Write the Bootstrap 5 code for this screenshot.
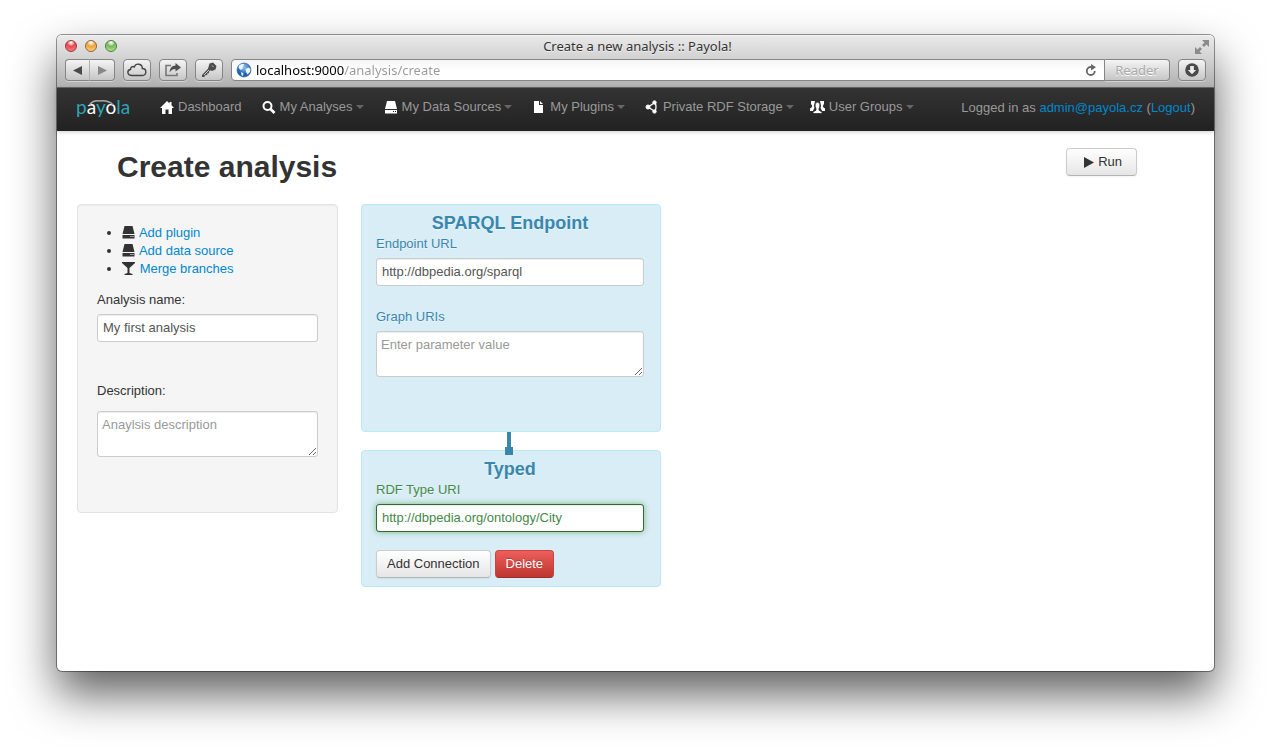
<!DOCTYPE html>
<html lang="en">
<head>
<meta charset="utf-8">
<meta name="viewport" content="width=device-width, initial-scale=1">
<title>Create a new analysis :: Payola!</title>
<link href="https://cdn.jsdelivr.net/npm/bootstrap@5.3.0/dist/css/bootstrap.min.css" rel="stylesheet">
<style>
  body { font: 13px/18px "Liberation Sans", Arial, sans-serif; color: #333; background: #fff; padding: 35px 57px 79px; }
  a { color: #08c; text-decoration: none; }
  h1, h2, label { margin: 0; }

  /* browser window */
  .window { border-radius: 5px; background: #fff; box-shadow: 0 0 0 1px rgba(0,0,0,.4), 0 23px 46px rgba(0,0,0,.63); }
  .chrome { background: linear-gradient(#e9e9e9, #cfcfcf 50%, #b0b0b0); border-top: 1px solid #f2f2f2; border-bottom: 1px solid #686868; border-radius: 5px 5px 0 0; padding: 0 8px 6px; font-family: "Noto Sans", sans-serif; }
  .titlebar { height: 23px; padding-bottom: 4px; }
  .titlebar-text { color: #333; text-shadow: 0 1px 0 rgba(255,255,255,.6); }
  .lights, .expand { width: 64px; }
  .expand { margin-right: -4px; }
  .light { width: 12px; height: 12px; border-radius: 50%; border: 1px solid; }
  .light-red { background: radial-gradient(circle at 50% 15%, #fff 5%, #e8474d 40%, #ff8d8d); border-color: #973338; }
  .light-yellow { background: radial-gradient(circle at 50% 15%, #fff 5%, #eda33c 40%, #ffe08a); border-color: #94622e; }
  .light-green { background: radial-gradient(circle at 50% 15%, #fff 5%, #73b958 40%, #c3f29c); border-color: #4b7c3c; }
  .tool { height: 22px; width: 28px; padding: 0; border: 1px solid #858585; border-radius: 4px; background: linear-gradient(#f4f4f4, #c6c6c6); box-shadow: 0 1px 0 rgba(255,255,255,.4); display: flex; align-items: center; justify-content: center; }
  .tool-half { width: 25px; }
  .tool-half:first-child { border-radius: 4px 0 0 4px; border-right-color: #b0b0b0; }
  .tool-half:last-child { border-radius: 0 4px 4px 0; border-left: 0; }
  .address { height: 22px; background: linear-gradient(#f5f5f5, #fff 50%); border: 1px solid #858585; border-radius: 4px 0 0 4px; padding: 0 7px 0 4px; }
  .address-input { border: 0; outline: 0; padding: 0; height: 20px; line-height: 20px; color: transparent; caret-color: #000; background: linear-gradient(90deg, #000 88px, #999 88px); -webkit-background-clip: text; background-clip: text; }
  .reader { width: 65px; border-radius: 0 4px 4px 0; border-left: 0; color: #aaa; text-shadow: 0 1px 0 #fff; }

  /* site navigation */
  .topnav { background: linear-gradient(#333, #222); padding: 0 19px; height: 43px; box-shadow: 0 1px 4px rgba(0,0,0,.2); color: #999; align-items: flex-start; }
  .topnav .navbar-brand { padding: 8px 0 0; margin: 0 18px 0 0; line-height: 1; }
  .topnav .nav-link { padding: 10px; color: #999; display: flex; align-items: center; line-height: 18px; white-space: nowrap; }
  .topnav .nav-link svg { margin-right: 4px; }
  .topnav .dropdown-toggle::after { margin-left: 3px; border-width: 4px 4px 0; color: #666; vertical-align: 0; }
  .login { padding-top: 11px; }

  /* controls */
  .btn { font-size: 13px; line-height: 18px; padding: 4px 10px; border: 1px solid #ccc; border-bottom-color: #b3b3b3; border-radius: 4px; }
  .btn-plain, .btn-plain:hover { color: #333; background: linear-gradient(#fff, #e6e6e6); box-shadow: inset 0 1px 0 rgba(255,255,255,.2), 0 1px 2px rgba(0,0,0,.05); }
  .btn-remove, .btn-remove:hover { color: #fff; background: linear-gradient(#ee5f5b, #bd362f); border-color: #c9433f #c9433f #a02d28; text-shadow: 0 -1px 0 rgba(0,0,0,.25); }
  .btn-run { padding: 4px 14px 4px 16px; }
  .form-control { font-size: 13px; line-height: 18px; height: 28px; padding: 3px 5px 5px; color: #555; border-color: #ccc; border-radius: 3px; box-shadow: inset 0 1px 1px rgba(0,0,0,.075); }
  textarea.form-control { height: 46px; padding: 4px; min-height: 0; resize: both; }
  .form-control::placeholder { color: #999; }

  /* page */
  .page { padding: 17px 20px 60px; }
  .page-head { padding: 0 57px 0 40px; margin-bottom: 27px; }
  .page-head h1 { font-size: 30px; line-height: 38px; font-weight: 700; height: 29px; }
  .workspace { gap: 23px; }
  .sidebar { flex: 0 0 261px; background: #f5f5f5; border: 1px solid #e3e3e3; border-radius: 4px; box-shadow: inset 0 1px 1px rgba(0,0,0,.05); padding: 19px 19px 55px; }
  .sidebar ul { padding-left: 25px; margin-bottom: 13px; }
  .sidebar svg { vertical-align: -2px; margin-right: 1px; }
  .sidebar label { display: block; margin-bottom: 5px; }
  .sidebar .field + .field { margin-top: 40px; }
  .sidebar .field + .field label { margin-bottom: 11px; }
  .node { width: 300px; background: #d9edf7; border: 1px solid #bce8f1; border-radius: 4px; color: #3a87ad; padding: 7px 16px 8px 14px; text-shadow: 0 1px 0 rgba(255,255,255,.5); }
  .node-tall { padding-bottom: 54px; }
  .node h2 { font-size: 18px; line-height: 22px; font-weight: 700; text-align: center; margin-bottom: 1px; }
  .node label { display: block; margin-bottom: 5px; }
  .node .field + .field { margin-top: 22px; }
  .node-actions { gap: 4px; margin-top: 18px; }
  .valid label { color: #468847; }
  .valid .form-control { color: #468847; border-color: #356635; box-shadow: inset 0 1px 1px rgba(0,0,0,.075), 0 0 6px #7aba7b; }
  .link { width: 4px; height: 18px; margin-left: 146px; background: #3a87ad; }
  .link::after { content: ""; position: absolute; left: -2px; bottom: -5px; width: 8px; height: 8px; background: #3a87ad; }
</style>
</head>
<body class="min-vh-100 d-flex flex-column">
<svg class="d-none" aria-hidden="true">
  <symbol id="drive" viewBox="0 0 12 13"><path d="M2 0h8l2 8H0zM0 9h12v3.500H0z" fill="currentColor"/><path d="M8 10h1v1H8zM10 10h1v1h-1z" fill="#fff"/></symbol>
</svg>
<div class="window flex-grow-1 d-flex flex-column">
  <header class="chrome">
    <div class="titlebar d-flex align-items-center justify-content-between">
      <div class="lights d-flex gap-2"><span class="light light-red"></span><span class="light light-yellow"></span><span class="light light-green"></span></div>
      <div class="titlebar-text">Create a new analysis :: Payola!</div>
      <div class="expand text-end"><svg width="16" height="16" viewBox="0 0 16 16" fill="#8b8b8b"><path d="M8 1h7v7l-2.500-2.500L10 8 8 6l2.500-2.500zM8 15H1V8l2.500 2.500L6 8l2 2-2.500 2.500z"/></svg></div>
    </div>
    <div class="d-flex gap-2">
      <div class="d-flex">
        <button class="tool tool-half" aria-label="Back"><svg width="9" height="9"><path d="M9 0v9L0 4.500z" fill="#4a4a4a"/></svg></button>
        <button class="tool tool-half" aria-label="Forward"><svg width="9" height="9"><path d="M0 0v9l9-4.500z" fill="#888"/></svg></button>
      </div>
      <button class="tool" aria-label="iCloud tabs"><svg width="20" height="14" viewBox="0 0 20 14" fill="none" stroke="#444" stroke-width="1.400"><path d="M5 12.500C-.2 12.500-.2 7 3.500 6.500 3.300 3.800 6 3 7.200 4 9-.5 15.500.5 15.300 5.500c4.700 0 4.700 7 .2 7z"/></svg></button>
      <button class="tool" aria-label="Share"><svg width="18" height="14" viewBox="0 0 18 14"><path d="M7 2.500H2v10h11V10" fill="none" stroke="#777" stroke-width="1.600"/><path d="M11.500 0L17 4.500l-5.500 4V6C9 6 7 7 5.500 9.500 6 5 8 2.800 11.500 2.600z" fill="#505050"/></svg></button>
      <button class="tool" aria-label="Passwords"><svg width="16" height="16" viewBox="0 0 16 16"><path d="M8.500 1.500L12 .5l3.500 3.500-1 3.500L11 9 9.500 8.200 8 9.500v1.700H6.300v1.700H4.600l-1.400 2.200H1V13l6-6.300z" fill="#4d4d4d"/><path d="M11 3.500l1.500 1.500M3 13l5-5" stroke="#ccc"/></svg></button>
      <div class="d-flex flex-grow-1">
        <div class="address d-flex align-items-center flex-grow-1">
          <svg width="16" height="16" viewBox="0 0 16 16"><defs><radialGradient id="g" cx=".5" cy=".3"><stop stop-color="#8cc5f5"/><stop offset="1" stop-color="#1f5fae"/></radialGradient></defs><circle cx="8" cy="8" r="7" fill="url(#g)" stroke="#2d5c96" stroke-width=".6"/><path d="M3 3.500l3-1.700 2.500.7L7 4.500 6.500 7 5 8 2.500 6zM9.500 7l3-1.500 2 1.500-.5 3-2.500 2.500L10 10zM5 10l2.500 1.500L7 14l-1.500-1z" fill="#e9f4fc"/></svg>
          <input class="address-input flex-grow-1 ms-1" aria-label="Address" value="localhost:9000/analysis/create">
          <svg width="12" height="13" viewBox="0 0 12 13"><path d="M8 3H5.500a4 4 0 1 0 4.300 4" fill="none" stroke="#666" stroke-width="1.800"/><path d="M6 0l5 3.300L6 6.500z" fill="#666"/></svg>
        </div>
        <button class="tool reader">Reader</button>
      </div>
      <button class="tool" aria-label="Downloads"><svg width="14" height="14" viewBox="0 0 14 14"><circle cx="7" cy="7" r="6.800" fill="#4a4a4a"/><path d="M5.200 3h3.600v4h2.300L7 11.200 2.900 7h2.300z" fill="#eee"/></svg></button>
    </div>
  </header>

  <nav class="topnav navbar navbar-expand flex-nowrap">
    <a class="navbar-brand" href="#"><svg width="58" height="28" viewBox="0 0 58 28" font-family="Lato, sans-serif" font-weight="400" font-size="19"><text x="0" y="18" fill="#2fa3b8">p<tspan fill="#fff">a</tspan>y<tspan fill="#fff">o</tspan>la</text><path d="M14 8q4-4 9-3 5-1 10 1 3 1 4 3" fill="none" stroke="#aaa" stroke-width="1.500"/></svg></a>
    <div class="navbar-nav me-auto">
      <a class="nav-link me-1" href="#"><svg width="14" height="13" viewBox="0 0 14 13" fill="#fff"><path d="M7 0l2.500 2.400V1h2v3.300L14 7h-2v6H8.500V8.500h-3V13H2V7H0z"/></svg>Dashboard</a>
      <a class="nav-link dropdown-toggle me-1" href="#"><svg width="14" height="13" viewBox="0 0 14 13" fill="none" stroke="#fff"><circle cx="5.500" cy="5" r="4" stroke-width="2"/><path d="M8.500 8l4 4" stroke-width="2.600"/></svg>My Analyses</a>
      <a class="nav-link dropdown-toggle me-1" href="#"><svg width="14" height="13" viewBox="0 0 12 13" fill="#fff"><path d="M2 0h8l2 8H0zM0 9h12v3.500H0z"/><path d="M8 10h1v1H8zM10 10h1v1h-1z" fill="#222"/></svg>My Data Sources</a>
      <a class="nav-link dropdown-toggle me-1" href="#"><svg width="14" height="12" viewBox="0 0 14 12" fill="#fff"><path d="M2 0h5v4h4v8H2zM8 0l3 3H8z"/></svg>My Plugins</a>
      <a class="nav-link dropdown-toggle" href="#"><svg width="14" height="14" viewBox="0 0 14 14" fill="#fff" stroke="#fff"><path d="M10 2.500L3 7l7 4.500M10 2.500q2 4.500 0 9" fill="none" stroke-width="1.300"/><circle cx="9.500" cy="2.500" r="1.700"/><circle cx="3" cy="7" r="2"/><circle cx="9.500" cy="11.500" r="1.700"/></svg>Private RDF Storage</a>
      <a class="nav-link dropdown-toggle" href="#"><svg width="15" height="14" viewBox="0 0 15 14" fill="#fff"><path d="M1 1h4l-.5 2.500-.5 2.500.5 2L2.800 11H0V8.500L2 7V5.500L1 4zM14 1h-4l.5 2.500.5 2.500-.5 2 1.700 3H15V8.500L13 7V5.500l1-1.500z"/><path d="M5.200 3.500Q7.500 1 9.800 3.500v3L9 8.500v1.700l3 1.800v1.500H3V12l3-1.800V8.500l-.8-2z" stroke="#222" stroke-width=".7"/></svg>User Groups</a>
    </div>
    <div class="login text-nowrap">Logged in as <a href="#">admin@payola.cz</a> (<a href="#">Logout</a>)</div>
  </nav>

  <main class="page">
    <div class="page-head d-flex justify-content-between align-items-start">
      <h1>Create analysis</h1>
      <button class="btn btn-plain btn-run"><svg class="me-1" width="11" height="11"><path d="M1 0v11l10-5.500z" fill="#333"/></svg>Run</button>
    </div>
    <div class="workspace d-flex align-items-start">
      <aside class="sidebar">
        <ul>
          <li><svg width="13" height="13"><use href="#drive"/></svg> <a href="#">Add plugin</a></li>
          <li><svg width="13" height="13"><use href="#drive"/></svg> <a href="#">Add data source</a></li>
          <li><svg width="13" height="13" viewBox="0 0 13 13" fill="#333"><path d="M0 0h13v1L7.500 6v5l3 1v1h-8v-1l3-1V6L0 1z"/></svg> <a href="#">Merge branches</a></li>
        </ul>
        <div class="field"><label for="name">Analysis name:</label><input id="name" class="form-control" value="My first analysis"></div>
        <div class="field"><label for="desc">Description:</label><textarea id="desc" class="form-control d-block" placeholder="Anaylsis description"></textarea></div>
      </aside>
      <div class="canvas">
        <section class="node node-tall">
          <h2>SPARQL Endpoint</h2>
          <div class="field"><label for="url">Endpoint URL</label><input id="url" class="form-control" value="http://dbpedia.org/sparql"></div>
          <div class="field"><label for="graphs">Graph URIs</label><textarea id="graphs" class="form-control d-block" placeholder="Enter parameter value"></textarea></div>
        </section>
        <div class="link position-relative"></div>
        <section class="node">
          <h2>Typed</h2>
          <div class="field valid"><label for="type">RDF Type URI</label><input id="type" class="form-control" value="http://dbpedia.org/ontology/City"></div>
          <div class="node-actions d-flex"><button class="btn btn-plain">Add Connection</button><button class="btn btn-remove">Delete</button></div>
        </section>
      </div>
    </div>
  </main>
</div>
<script src="https://cdn.jsdelivr.net/npm/bootstrap@5.3.0/dist/js/bootstrap.bundle.min.js"></script>
</body>
</html>
